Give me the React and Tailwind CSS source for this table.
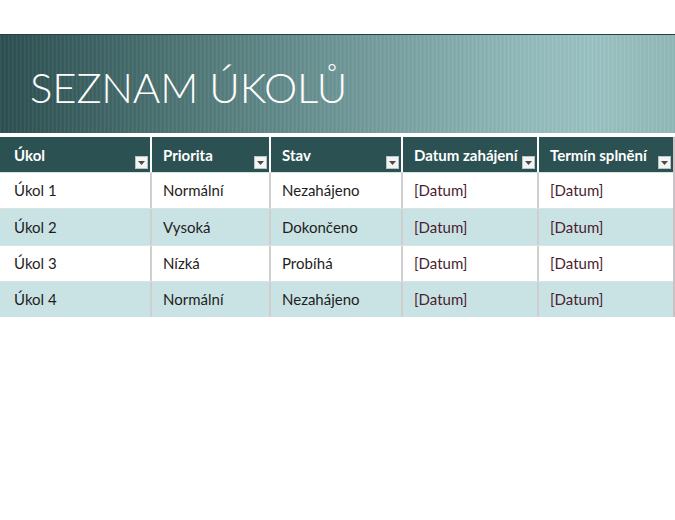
import React from "react";

const columns = [
  { title: "Úkol", width: "w-[150px]", row: "" },
  { title: "Priorita", width: "w-[119px]" },
  { title: "Stav", width: "w-[132px]" },
  { title: "Datum zahájení", width: "w-[136px]" },
  { title: "Termín splnění", width: "w-[136px]" },
];

const rows = [
  ["Úkol 1", "Normální", "Nezahájeno", "[Datum]", "[Datum]"],
  ["Úkol 2", "Vysoká", "Dokončeno", "[Datum]", "[Datum]"],
  ["Úkol 3", "Nízká", "Probíhá", "[Datum]", "[Datum]"],
  ["Úkol 4", "Normální", "Nezahájeno", "[Datum]", "[Datum]"],
];

const rowHeights = ["h-[36px]", "h-[37px]", "h-[36px]", "h-[36px]"];

function FilterButton() {
  return (
    <span className="absolute right-[2px] bottom-[3px] w-[13px] h-[13px] bg-[#f4f4f4] border border-[#b9c4c4] flex items-center justify-center">
      <svg width="7" height="4" viewBox="0 0 7 4">
        <path d="M0 0h7L3.5 4z" fill="#4a4a4a" />
      </svg>
    </span>
  );
}

function TaskList() {
  return (
    <div className="w-[675px] h-[520px] bg-white pt-[34px] font-['Lato',sans-serif]">
      {/* Banner */}
      <div className="h-[99px] border-t border-[#24403f] bg-[repeating-linear-gradient(90deg,rgba(255,255,255,0.05)_0px,rgba(255,255,255,0.05)_1px,rgba(0,0,0,0.04)_2px,rgba(0,0,0,0)_4px),linear-gradient(90deg,#2c4f51_0%,#4c7373_25%,#6e9696_50%,#93bbbb_78%,#9bc3c3_88%,#91b8b8_100%)] flex items-center pl-[30px]">
        <h1 className="text-white text-[42px] font-light tracking-[-0.2px] leading-none mt-[6px]">
          SEZNAM ÚKOLŮ
        </h1>
      </div>

      {/* Table */}
      <div className="mt-[4px] w-[675px] border-r-2 border-[#c9c2c6]">
        <div className="flex h-[35px] bg-[#2c5152]">
          {columns.map((c, i) => (
            <div
              key={c.title}
              className={`${c.width} relative h-full pt-[7px] text-white text-[15px] font-bold ${i > 0 ? "border-l-2 border-white pl-[11px]" : "pl-[14px]"}`}
            >
              {c.title}
              <FilterButton />
            </div>
          ))}
        </div>
        {rows.map((r, ri) => (
          <div
            key={ri}
            className={`flex ${rowHeights[ri]} border-t border-[#d6e4e4] ${ri % 2 === 1 ? "bg-[#c9e2e4]" : "bg-white"}`}
          >
            {r.map((cell, ci) => (
              <div
                key={ci}
                className={`${columns[ci].width} flex items-center text-[15px] ${ci > 0 ? "border-l-2 border-[#cfcfcf] pl-[11px]" : "pl-[14px]"} ${ci > 2 ? "text-[#4a1e30]" : "text-[#1e1e1e]"}`}
              >
                {cell}
              </div>
            ))}
          </div>
        ))}
      </div>
    </div>
  );
}

export default function App() {
  return <TaskList />;
}
